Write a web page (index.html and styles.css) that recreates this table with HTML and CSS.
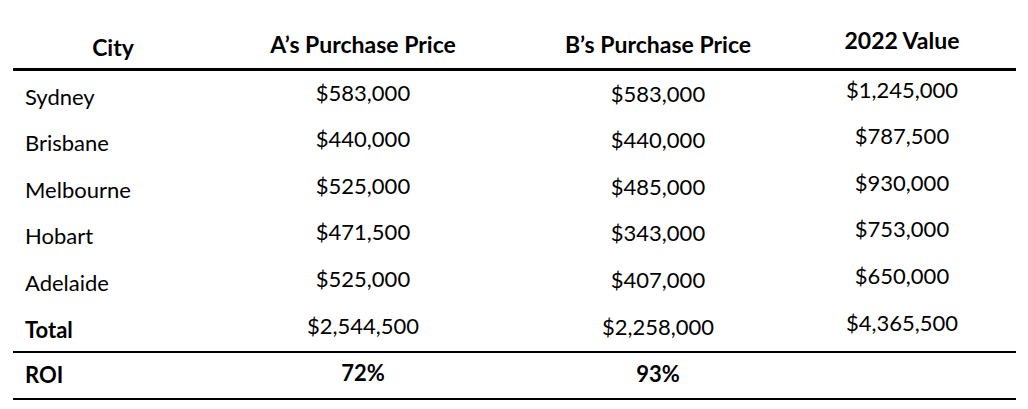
FILE: index.html
```html
<!DOCTYPE html>
<html lang="en">
<head>
<meta charset="utf-8">
<title>Purchase Price ROI</title>
<link rel="stylesheet" href="styles.css">
</head>
<body>
<div class="table">
  <div class="row head">
    <div class="c1 hc">City</div>
    <div class="c2">A’s Purchase Price</div>
    <div class="c3">B’s Purchase Price</div>
    <div class="c4">2022 Value</div>
  </div>
  <div class="row">
    <div class="c1">Sydney</div>
    <div class="c2">$583,000</div>
    <div class="c3">$583,000</div>
    <div class="c4">$1,245,000</div>
  </div>
  <div class="row">
    <div class="c1">Brisbane</div>
    <div class="c2">$440,000</div>
    <div class="c3">$440,000</div>
    <div class="c4">$787,500</div>
  </div>
  <div class="row">
    <div class="c1">Melbourne</div>
    <div class="c2">$525,000</div>
    <div class="c3">$485,000</div>
    <div class="c4">$930,000</div>
  </div>
  <div class="row">
    <div class="c1">Hobart</div>
    <div class="c2">$471,500</div>
    <div class="c3">$343,000</div>
    <div class="c4">$753,000</div>
  </div>
  <div class="row">
    <div class="c1">Adelaide</div>
    <div class="c2">$525,000</div>
    <div class="c3">$407,000</div>
    <div class="c4">$650,000</div>
  </div>
  <div class="row total">
    <div class="c1 b">Total</div>
    <div class="c2">$2,544,500</div>
    <div class="c3">$2,258,000</div>
    <div class="c4">$4,365,500</div>
  </div>
  <div class="row roi">
    <div class="c1 b">ROI</div>
    <div class="c2 b">72%</div>
    <div class="c3 b">93%</div>
    <div class="c4"></div>
  </div>
</div>
</body>
</html>
```

FILE: styles.css
```css
html, body {
  margin: 0;
  padding: 0;
  background: #fff;
}

body {
  font-family: "Lato", "Open Sans", sans-serif;
  font-size: 22px;
  line-height: 26px;
  color: #000;
}

.table {
  margin-left: 13px;
  width: 1003px;
}

.row {
  display: grid;
  grid-template-columns: 200px 300px 290px 198px 1fr;
  height: 46.67px;
  box-sizing: border-box;
}

.row > div {
  white-space: nowrap;
}

.c1 {
  padding-left: 12px;
  padding-top: 12.5px;
}

.c2 {
  text-align: center;
  padding-top: 8.5px;
}

.c3 {
  text-align: center;
  padding-top: 9.5px;
}

.c4 {
  text-align: center;
  padding-top: 5.5px;
}

.b {
  font-weight: 700;
}

.head {
  height: 71px;
  border-bottom: 3px solid #000;
  font-weight: 700;
  font-size: 23px;
}

.head .c1 {
  padding-left: 0;
  text-align: center;
  padding-top: 34px;
}

.head .c2,
.head .c3 {
  padding-top: 30.5px;
}

.head .c4 {
  padding-top: 26.5px;
}

.total {
  height: 48.67px;
  border-bottom: 2px solid #000;
}

.roi {
  height: 47px;
  border-bottom: 2px solid #000;
}

.roi .c1 {
  padding-top: 9px;
}

.roi .c2 {
  padding-top: 7.5px;
}

.roi .c3 {
  padding-top: 8px;
}
```
